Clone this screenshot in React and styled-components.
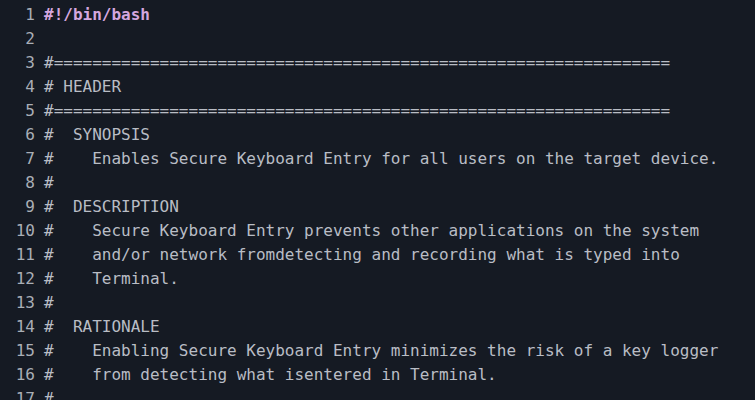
import styled, { createGlobalStyle } from "styled-components";

const GlobalStyle = createGlobalStyle`
  html, body {
    margin: 0;
    padding: 0;
    background: #151a23;
  }
`;

const Viewer = styled.div`
  width: 755px;
  height: 400px;
  overflow: hidden;
  background: #151a23;
  padding-top: 3px;
  box-sizing: border-box;
  font-family: "DejaVu Sans Mono", "Liberation Mono", monospace;
  font-size: 16px;
  line-height: 24px;
`;

const Row = styled.div`
  display: flex;
  height: 24px;
`;

const LineNo = styled.span`
  width: 35px;
  flex: none;
  text-align: right;
  color: #a9aeb6;
`;

const Code = styled.span`
  padding-left: 9px;
  white-space: pre;
  color: ${({ $shebang }) => ($shebang ? "#d4a7df" : "#b9bdc5")};
  font-weight: ${({ $shebang }) => ($shebang ? "bold" : "normal")};
`;

const rule = "#" + "=".repeat(64);

const lines = [
  "#!/bin/bash",
  "",
  rule,
  "# HEADER",
  rule,
  "#  SYNOPSIS",
  "#    Enables Secure Keyboard Entry for all users on the target device.",
  "#",
  "#  DESCRIPTION",
  "#    Secure Keyboard Entry prevents other applications on the system",
  "#    and/or network fromdetecting and recording what is typed into",
  "#    Terminal.",
  "#",
  "#  RATIONALE",
  "#    Enabling Secure Keyboard Entry minimizes the risk of a key logger",
  "#    from detecting what isentered in Terminal.",
  "#",
];

export default function App() {
  return (
    <>
      <GlobalStyle />
      <Viewer>
        {lines.map((text, i) => (
          <Row key={i}>
            <LineNo>{i + 1}</LineNo>
            <Code $shebang={i === 0}>{text}</Code>
          </Row>
        ))}
      </Viewer>
    </>
  );
}
